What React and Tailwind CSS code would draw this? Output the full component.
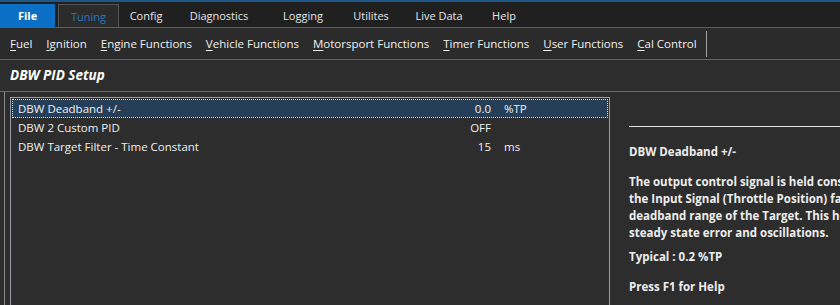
const TABS = [
  { label: 'Config', w: 'w-[54px]' },
  { label: 'Diagnostics', w: 'w-[92px]' },
  { label: 'Logging', w: 'w-[76px]' },
  { label: 'Utilites', w: 'w-[60px]' },
  { label: 'Live Data', w: 'w-[76px]' },
  { label: 'Help', w: 'w-[54px]' },
];

const MENU = [
  { key: 'F', rest: 'uel' },
  { key: 'I', rest: 'gnition' },
  { key: 'E', rest: 'ngine Functions' },
  { key: 'V', rest: 'ehicle Functions' },
  { key: 'M', rest: 'otorsport Functions' },
  { key: 'T', rest: 'imer Functions' },
  { key: 'U', rest: 'ser Functions' },
  { key: 'C', rest: 'al Control' },
];

const ROWS = [
  { label: 'DBW Deadband +/-', value: '0.0', unit: '%TP', selected: true },
  { label: 'DBW 2 Custom PID', value: 'OFF', unit: '' },
  { label: 'DBW Target Filter - Time Constant', value: '15', unit: 'ms' },
];

const HELP = [
  'The output control signal is held constant when',
  'the Input Signal (Throttle Position) falls within the',
  'deadband range of the Target. This helps reduce',
  'steady state error and oscillations.',
];

export default function App() {
  return (
    <div className="flex h-[305px] w-[840px] flex-col overflow-hidden bg-[#2d2d2d] font-['Open_Sans',sans-serif] text-[11.5px] leading-[17px] text-[#f0f0f0]">
      {/* tab strip */}
      <div className="flex h-[28px] shrink-0 items-end border-t-2 border-b border-t-[#1d5888] border-b-[#5e5e5e] bg-[#202020] text-[11px]">
        <div className="flex h-[23px] w-[55px] items-center justify-center bg-[#0b6fc6] font-bold text-white">File</div>
        <div className="ml-[3px] flex h-[23px] w-[61px] items-center justify-center border border-b-0 border-[#555] bg-[#2b2b2b] text-[#2878c0]">
          Tuning
        </div>
        {TABS.map((t) => (
          <div key={t.label} className={'flex h-[23px] items-center justify-center whitespace-nowrap text-[#e6e6e6] ' + t.w}>
            {t.label}
          </div>
        ))}
      </div>

      {/* menu bar */}
      <div className="flex h-[32px] shrink-0 items-center border-b border-[#646464] bg-[#2b2b2b] pl-[10px]">
        {MENU.map((m) => (
          <span key={m.key} className="mr-[14px] whitespace-nowrap">
            <span className="underline underline-offset-2">{m.key}</span>
            {m.rest}
          </span>
        ))}
        <span className="-ml-[5px] h-[26px] w-px bg-[#a0a0a0]" />
      </div>

      {/* title */}
      <div className="flex h-[32px] shrink-0 items-center border-b border-[#6c6c6c] pl-[10px] text-[13.5px] font-bold italic text-white">
        DBW PID Setup
      </div>

      {/* body */}
      <div className="flex min-h-0 flex-1">
        <div className="ml-[4px] flex w-[606px] border-l border-[#8a8a8a] pl-[5px] pt-[5px]">
          <div className="flex-1 border-l border-t border-r border-[#9c9ca6] p-px">
            {ROWS.map((r) => (
              <div
                key={r.label}
                className={
                  'flex h-[19px] items-center ' +
                  (r.selected ? 'border border-dotted border-[#d8d8d8] bg-[#263f58]' : 'border border-transparent')
                }
              >
                <span className="flex-1 whitespace-nowrap pl-[5px]">{r.label}</span>
                <span className="w-[60px] text-right">{r.value}</span>
                <span className="w-[116px] pl-[13px]">{r.unit}</span>
              </div>
            ))}
          </div>
        </div>

        <div className="min-w-0 flex-1 overflow-hidden pl-[19px] font-bold text-[#ededed]">
          <div className="mt-[34px] h-px bg-[#e0e0e0]" />
          <div className="mt-[16px] whitespace-nowrap">DBW Deadband +/-</div>
          <div className="mt-[13px]">
            {HELP.map((l) => (
              <div key={l} className="whitespace-nowrap">
                {l}
              </div>
            ))}
          </div>
          <div className="mt-[7px] whitespace-nowrap">Typical : 0.2 %TP</div>
          <div className="mt-[13px] whitespace-nowrap">Press F1 for Help</div>
        </div>
      </div>
    </div>
  );
}
